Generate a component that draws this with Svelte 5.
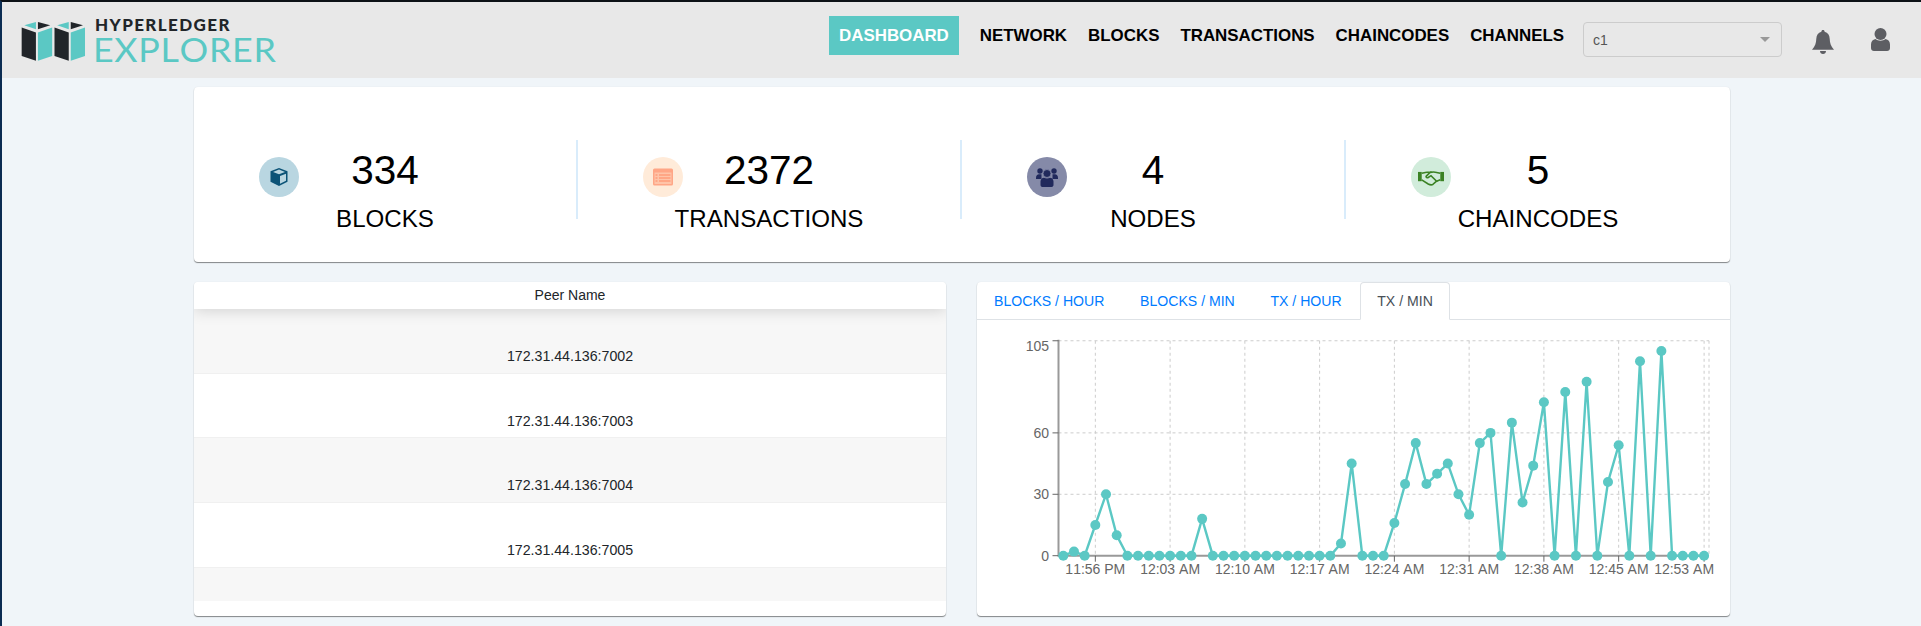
<script>
  const navItems = ['DASHBOARD', 'NETWORK', 'BLOCKS', 'TRANSACTIONS', 'CHAINCODES', 'CHANNELS'];
  const stats = [
    { key: 'blocks', value: 334, label: 'BLOCKS' },
    { key: 'tx', value: 2372, label: 'TRANSACTIONS' },
    { key: 'nodes', value: 4, label: 'NODES' },
    { key: 'chain', value: 5, label: 'CHAINCODES' }
  ];
  const peers = ['172.31.44.136:7002', '172.31.44.136:7003', '172.31.44.136:7004', '172.31.44.136:7005'];
  const tabs = ['BLOCKS / HOUR', 'BLOCKS / MIN', 'TX / HOUR', 'TX / MIN'];

  const values = [
    0, 2, 0, 15, 30, 10, 0, 0, 0, 0, 0, 0, 0, 18, 0, 0, 0, 0, 0, 0, 0, 0, 0, 0, 0, 0, 6, 45, 0, 0, 0,
    16, 35, 55, 35, 40, 45, 30, 20, 55, 60, 0, 65, 26, 44, 75, 0, 80, 0, 85, 0, 36, 54, 0, 95, 0, 100, 0, 0, 0, 0
  ];
  const ticks = [
    { i: 3, label: '11:56 PM' },
    { i: 10, label: '12:03 AM' },
    { i: 17, label: '12:10 AM' },
    { i: 24, label: '12:17 AM' },
    { i: 31, label: '12:24 AM' },
    { i: 38, label: '12:31 AM' },
    { i: 45, label: '12:38 AM' },
    { i: 52, label: '12:45 AM' },
    { i: 60, label: '12:53 AM', dx: -20 }
  ];
  const yTicks = [
    { v: 105, dy: 5 },
    { v: 60, dy: 0 },
    { v: 30, dy: 0 },
    { v: 0, dy: 0 }
  ];

  const left = 81.5;
  const right = 732;
  const px = (i) => 86.3 + i * 10.68;
  const py = (v) => 235.7 - v * 2.047;
  const line = values.map((v, i) => px(i).toFixed(1) + ',' + py(v).toFixed(1)).join(' ');
</script>

<div class="page">
  <header class="topbar">
    <div class="logo">
      <svg class="logo-mark" viewBox="60 63 196 122" width="65" height="41">
        {#each [0, 99] as dx}
          <g transform="translate({dx} 0)">
            <polygon points="62,82 105,97 105,182 62,168" fill="#212529" />
            <polygon points="111,97 154,82 154,168 111,182" fill="#5bc8c4" />
            <polygon points="70,75 105,65 105,87" fill="#5bc8c4" />
            <polygon points="111,65 148,75 111,87" fill="#212529" />
          </g>
        {/each}
      </svg>
      <div class="logo-text">
        <span class="logo-top">HYPERLEDGER</span>
        <span class="logo-bottom">EXPLORER</span>
      </div>
    </div>

    <nav class="nav">
      {#each navItems as item, i}
        <span class="nav-item" class:active={i === 0}>{item}</span>
      {/each}
    </nav>

    <div class="channel-select">
      <span>c1</span>
      <i class="caret"></i>
    </div>

    <svg class="bell" viewBox="0 0 22 24" width="22" height="24">
      <path d="M11 0c1 0 1.600.7 1.600 1.700 3.400.8 4.900 3.600 5.100 7 .2 4 1 7.400 4.300 11H0c3.300-3.600 4.100-7 4.300-11 .2-3.400 1.700-6.200 5.100-7C9.400.7 10 0 11 0z" fill="#5d5e63" />
      <path d="M8 21h6c0 1.800-1.300 3-3 3s-3-1.200-3-3z" fill="#5d5e63" />
    </svg>

    <svg class="user" viewBox="0 0 19 23" width="19" height="23">
      <circle cx="9.500" cy="6" r="6" fill="#5d5e63" />
      <path d="M4.500 11c1.400 1.100 3 1.700 5 1.700s3.600-.6 5-1.700c2.800.6 4.500 2.500 4.500 5.500v3.500c0 1.700-1.300 3-3 3H3c-1.700 0-3-1.300-3-3v-3.500C0 13.500 1.700 11.600 4.500 11z" fill="#5d5e63" />
    </svg>
  </header>

  <main class="content">
    <section class="card stats">
      {#each stats as s}
        <div class="stat">
          <div class="stat-icon {s.key}">
            {#if s.key === 'blocks'}
              <svg viewBox="0 0 20 20" width="20" height="20">
                <path d="M10 1l8.500 3.200v10.600L10 19 1.500 14.800V4.200z" fill="#0b5377" />
                <path d="M10 2.600l6 2.300-6 2.300-6-2.300z" fill="#b9d6e1" />
                <path d="M11 9l6-2.300v7.100L11 16.800z" fill="#b9d6e1" />
              </svg>
            {:else if s.key === 'tx'}
              <svg viewBox="0 0 20 18" width="20" height="18">
                <rect y="0.500" width="20" height="17" rx="1.500" fill="#ffa686" />
                <rect x="1.500" y="4.500" width="17" height="11.500" fill="#ffc4a8" />
                <path d="M2.500 7h2M6 7h11.500M2.500 10h2M6 10h11.500M2.500 13h2M6 13h11.500" stroke="#ff9c7a" stroke-width="1.300" />
              </svg>
            {:else if s.key === 'nodes'}
              <svg viewBox="0 0 22 20" width="22" height="20">
                <circle cx="4" cy="4" r="2.700" fill="#21295c" />
                <circle cx="18" cy="4" r="2.700" fill="#21295c" />
                <path d="M0 11c0-2.500 1.400-3.700 3-3.700h2.500V12H0zM22 11c0-2.500-1.400-3.700-3-3.700h-2.500V12H22z" fill="#21295c" />
                <circle cx="11" cy="6.500" r="4" fill="#21295c" stroke="#858aa8" stroke-width="0.800" />
                <path d="M4.500 18v-3.500c0-2.300 1.700-3.800 3.500-3.800 1.800 1 4.200 1 6 0 1.800 0 3.500 1.500 3.500 3.800V18c0 1-.8 2-2 2h-9c-1.200 0-2-1-2-2z" fill="#21295c" />
              </svg>
            {:else}
              <svg viewBox="0 0 28 18" width="26" height="17">
                <rect x="0" y="3" width="4" height="10" fill="#3b8224" />
                <rect x="24" y="3" width="4" height="10" fill="#3b8224" />
                <path d="M4 4.500l4-1c2-.5 3 0 5 0l-4 4c-.8 1 .7 2.300 2 1.500l3-2 6 6-4 3.500c-2 1-3 .6-5-.5L4 11.500" fill="none" stroke="#3b8224" stroke-width="1.700" />
                <path d="M24 4.500l-4-1c-2-.5-4-.5-7 0M20 13l4-1.500" fill="none" stroke="#3b8224" stroke-width="1.700" />
              </svg>
            {/if}
          </div>
          <div class="stat-text">
            <div class="stat-value">{s.value}</div>
            <div class="stat-label">{s.label}</div>
          </div>
        </div>
      {/each}
    </section>

    <div class="lower">
      <section class="card peers">
        <div class="peers-head">Peer Name</div>
        {#each peers as peer}
          <div class="peer-row">{peer}</div>
        {/each}
        <div class="peer-row filler"></div>
      </section>

      <section class="card chart-card">
        <ul class="tabs">
          {#each tabs as tab, i}
            <li class="tab" class:current={i === 3}>{tab}</li>
          {/each}
        </ul>
        <svg class="chart" viewBox="0 0 753 296" width="753" height="296">
          <g class="grid">
            <line x1={left} x2={right} y1={py(105)} y2={py(105)} />
            <line x1={left} x2={right} y1={py(60)} y2={py(60)} />
            <line x1={left} x2={right} y1={py(30)} y2={py(30)} />
            {#each ticks as t}
              <line x1={px(t.i)} x2={px(t.i)} y1={py(105)} y2={py(0)} />
            {/each}
            <line x1={right} x2={right} y1={py(105)} y2={py(0)} />
          </g>

          <g class="axis">
            <line x1={left} x2={left} y1={py(105) - 1} y2={py(0) + 1} />
            <line x1={left} x2={right - 4} y1={py(0)} y2={py(0)} />
            {#each yTicks as t}
              <line x1={left - 6} x2={left} y1={py(t.v)} y2={py(t.v)} class="tick" />
            {/each}
            {#each ticks as t}
              <line x1={px(t.i)} x2={px(t.i)} y1={py(0)} y2={py(0) + 6} class="tick" />
            {/each}
          </g>

          {#each yTicks as t}
            <text x="72" y={py(t.v) + t.dy + 5} text-anchor="end">{t.v}</text>
          {/each}
          {#each ticks as t}
            <text x={px(t.i) + (t.dx ?? 0)} y="254" text-anchor="middle">{t.label}</text>
          {/each}

          <polyline points={line} fill="none" stroke="#5bc8c4" stroke-width="2.400" />
          {#each values as v, i}
            <circle cx={px(i)} cy={py(v)} r="5" fill="#5bc8c4" />
          {/each}
        </svg>
      </section>
    </div>
  </main>
</div>

<style>
  :global(body) {
    margin: 0;
    background: #f0f5f9;
    font-family: "Liberation Sans", Arial, sans-serif;
    font-kerning: none;
  }

  .page {
    height: 626px;
    overflow: hidden;
    box-sizing: border-box;
    border-top: 2px solid #0c1116;
    border-left: 2px solid #0b2c52;
    background: #f0f5f9;
  }

  .topbar {
    height: 76px;
    display: flex;
    align-items: flex-start;
    padding: 0 31px 0 19px;
    background: #e8e8e8;
    box-sizing: border-box;
  }

  .logo {
    display: flex;
    align-items: flex-start;
    padding-top: 19px;
  }

  .logo-mark {
    display: block;
    margin-right: 9px;
  }

  .logo-text {
    display: flex;
    flex-direction: column;
    margin-top: -6px;
    font-family: Lato, sans-serif;
  }

  .logo-top {
    font-size: 17px;
    line-height: 20px;
    font-weight: 900;
    color: #212529;
    letter-spacing: 1.400px;
  }

  .logo-bottom {
    margin-left: -2px;
    font-size: 32px;
    line-height: 30px;
    font-weight: 400;
    color: #5bc8c4;
    letter-spacing: 0.600px;
    transform: scaleX(1.120);
    transform-origin: left center;
  }

  .nav {
    display: flex;
    margin-left: auto;
    margin-top: 14px;
    gap: 1px;
  }

  .nav-item {
    padding: 0 10px;
    height: 39px;
    line-height: 39px;
    font-size: 16.900px;
    font-weight: 700;
    color: #000;
  }

  .nav-item.active {
    margin-right: 10px;
    background: #5bc8c4;
    color: #fff;
  }

  .channel-select {
    width: 199px;
    height: 35px;
    margin: 20px 0 0 9px;
    padding: 0 10px 0 9px;
    display: flex;
    align-items: center;
    justify-content: space-between;
    box-sizing: border-box;
    border: 1px solid #ccc;
    border-radius: 4px;
    font-size: 14px;
    color: #555;
  }

  .caret {
    width: 0;
    height: 0;
    margin-right: 1px;
    border-left: 5px solid transparent;
    border-right: 5px solid transparent;
    border-top: 5px solid #999;
  }

  .bell {
    display: block;
    margin: 28px 0 0 30px;
  }

  .user {
    display: block;
    margin: 26px 0 0 37px;
  }

  .content {
    padding: 9px 191px 0 192px;
  }

  .card {
    background: #fff;
    border-radius: 4px;
    box-shadow: 0 1px 1px rgba(0, 0, 0, 0.45), 0 0 2px rgba(0, 0, 0, 0.06);
    overflow: hidden;
  }

  .stats {
    height: 175px;
    display: grid;
    grid-template-columns: repeat(4, 1fr);
    align-items: start;
    padding-top: 53px;
    box-sizing: border-box;
  }

  .stat {
    height: 79px;
    display: grid;
    grid-template-columns: minmax(0, 1fr) auto minmax(0, 1fr);
    border-right: 2px solid #d9ecfb;
  }

  .stat:last-child {
    border-right: none;
  }

  .stat-icon {
    width: 40px;
    height: 40px;
    margin: 17px 0 0 65px;
    display: flex;
    align-items: center;
    justify-content: center;
    border-radius: 50%;
  }

  .stat-icon.blocks { background: #b9d6e1; }
  .stat-icon.tx { background: #ffebd9; }
  .stat-icon.nodes { background: #858aa8; }
  .stat-icon.chain { background: #d1ecdb; }

  .stat-text {
    grid-column: 2;
    text-align: center;
    color: #000;
    margin-top: 7px;
  }

  .stat-value {
    font-size: 40.500px;
    line-height: 46px;
  }

  .stat-label {
    margin-top: 12px;
    font-size: 24.100px;
    line-height: 28px;
  }

  .lower {
    display: grid;
    grid-template-columns: 752px 753px;
    gap: 31px;
    margin-top: 20px;
    height: 334px;
  }

  .peers {
    position: relative;
  }

  .peers-head {
    position: relative;
    height: 27px;
    line-height: 27px;
    text-align: center;
    font-size: 14px;
    color: #212529;
    background: #fff;
    box-shadow: 0 2px 15px rgba(0, 0, 0, 0.15);
  }

  .peer-row {
    height: 64.700px;
    box-sizing: border-box;
    padding-top: 37px;
    text-align: center;
    font-size: 14.200px;
    line-height: 20px;
    color: #212529;
    border-bottom: 1px solid #f0f0f0;
  }

  .peer-row:nth-of-type(even) {
    background: #f7f7f7;
  }

  .peer-row.filler {
    height: 33px;
    padding: 0;
    border-bottom: none;
    background: #f7f7f7;
  }

  .tabs {
    display: flex;
    gap: 1.600px;
    height: 38px;
    margin: 0;
    padding: 0;
    list-style: none;
    box-sizing: border-box;
    border-bottom: 1px solid #dee2e6;
  }

  .tab {
    height: 38px;
    box-sizing: border-box;
    padding: 0 16px;
    line-height: 36px;
    font-size: 14.100px;
    color: #007bff;
    border: 1px solid transparent;
    border-radius: 4px 4px 0 0;
  }

  .tab.current {
    color: #495057;
    background: #fff;
    border-color: #dee2e6 #dee2e6 #fff;
  }

  .chart {
    display: block;
  }

  .grid line {
    stroke: #ccc;
    stroke-width: 1;
    stroke-dasharray: 3 3;
  }

  .axis line {
    stroke: #999;
    stroke-width: 2;
  }

  .axis line.tick {
    stroke-width: 1;
    stroke: #666;
  }

  .chart text {
    font-size: 14px;
    fill: #666;
  }
</style>
